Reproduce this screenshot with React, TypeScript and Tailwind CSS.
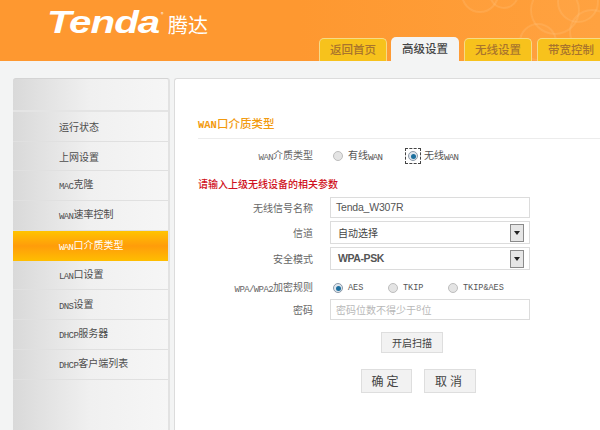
import React from "react";

const cjk = '"Noto Sans CJK SC", "Liberation Sans", sans-serif';

function Mixed({ text, latin = "text-[9px] tracking-[-0.6px] align-[-1px]" }: { text: string; latin?: string }) {
  const parts = text.split(/([\x00-\x7f]+)/).filter(Boolean);
  return (
    <>
      {parts.map((p, i) =>
        /^[\x00-\x7f]+$/.test(p) ? (
          <span key={i} className={`font-['Liberation_Mono',monospace] ${latin}`}>
            {p}
          </span>
        ) : (
          <span key={i}>{p}</span>
        )
      )}
    </>
  );
}

function Tab({ label, active, w }: { label: string; active?: boolean; w: string }) {
  return (
    <div
      className={
        active
          ? `${w} h-[24px] rounded-t-[5px] bg-[#f3f4f4] text-[#454545] font-medium text-[11.5px] flex items-center justify-center`
          : `${w} h-[23px] rounded-t-[5px] bg-[#f7c21c] border border-b-0 border-[#f6da86] text-[#a9742c] font-medium text-[11.5px] flex items-center justify-center whitespace-nowrap overflow-hidden`
      }
    >
      {label}
    </div>
  );
}

const menu = ["运行状态", "上网设置", "MAC克隆", "WAN速率控制", "WAN口介质类型", "LAN口设置", "DNS设置", "DHCP服务器", "DHCP客户端列表"];

function Radio({ on }: { on?: boolean }) {
  return (
    <span
      className={
        on
          ? "w-[10px] h-[10px] shrink-0 rounded-full border border-[#8d9aa8] bg-[#dfe6ee] flex items-center justify-center"
          : "w-[10px] h-[10px] shrink-0 rounded-full border border-[#bdbdbd] bg-[#e4e4e4]"
      }
    >
      {on && <span className="w-[5px] h-[5px] rounded-full bg-[#1c6f9e]" />}
    </span>
  );
}

function Row({ label, children, cls }: { label: React.ReactNode; children: React.ReactNode; cls: string }) {
  return (
    <div className={`flex items-center ${cls}`}>
      <div className="w-[115px] shrink-0 text-right text-[10px] text-[#666] whitespace-nowrap">{label}</div>
      <div className="ml-[17px] flex items-center w-[200px]">{children}</div>
    </div>
  );
}

function Select({ value, bold }: { value: string; bold?: boolean }) {
  return (
    <div className="w-[200px] h-[23px] border border-[#dcdcdc] bg-white flex items-center justify-between pl-[7px] pr-[5px]">
      <span
        className={
          bold
            ? "text-[10.5px] tracking-[-0.4px] text-[#555] font-['Liberation_Sans',sans-serif] font-bold"
            : "text-[10px] text-[#444]"
        }
      >
        {value}
      </span>
      <span className="w-[14px] h-[18px] bg-[#e6e6e6] border border-[#8a8a8a] flex items-center justify-center">
        <svg width="6" height="4" viewBox="0 0 6 4">
          <path d="M0 0h6L3 4z" fill="#222" />
        </svg>
      </span>
    </div>
  );
}

export default function App() {
  return (
    <div className="w-[600px] h-[430px] overflow-hidden flex flex-col bg-[#f3f4f4]" style={{ fontFamily: cjk }}>
      {/* header */}
      <header className="relative h-[61px] shrink-0 bg-gradient-to-r from-[#fe9830] via-[#fe9830] to-[#ffa03c] overflow-hidden">
        <svg className="absolute right-0 top-0" width="190" height="61" viewBox="0 0 190 61" fill="none">
          <g stroke="#ffd49a" strokeOpacity="0.18" strokeWidth="2" fill="#ffc98a" fillOpacity="0.06">
            <circle cx="70" cy="-6" r="18" />
            <circle cx="94" cy="-6" r="14" />
            <circle cx="145" cy="10" r="24" />
            <circle cx="168" cy="2" r="20" />
            <circle cx="128" cy="42" r="18" />
            <circle cx="182" cy="32" r="22" />
          </g>
        </svg>
        <div className="absolute left-[47px] top-[3px] flex items-start">
          <span className="origin-left scale-x-[1.26] inline-block text-white italic font-bold text-[32px] leading-[38px] font-['Liberation_Sans',sans-serif] tracking-[-0.8px]">
            Tenda
          </span>
        </div>
        <span className="absolute left-[161px] top-[11px] text-white text-[5px] leading-[6px]">®</span>
        <span className="absolute left-[168px] top-[10px] text-white text-[20px] leading-[29px]">腾达</span>
        <nav className="absolute left-[319px] bottom-0 flex items-end">
          <Tab label="返回首页" w="w-[68px]" />
          <div className="w-[4px]" />
          <Tab label="高级设置" active w="w-[68px]" />
          <div className="w-[5px]" />
          <Tab label="无线设置" w="w-[68px]" />
          <div className="w-[5px]" />
          <Tab label="带宽控制" w="w-[68px]" />
        </nav>
      </header>

      <div className="flex flex-1 pt-[17px] pl-[13px] gap-[4px] min-h-0">
        {/* sidebar */}
        <aside className="w-[157px] h-[400px] shrink-0 rounded-t-[3px] border-t border-[#d4d4d4] border-r-[2px] border-r-[#e2e2e2] bg-gradient-to-r from-[#d9d9d9] via-[#f0f0f0] to-[#f6f6f6]">
          <div className="h-[33px] border-b-[2px] border-[#e4e4e4]" />
          {menu.map((m, i) =>
            i === 4 ? (
              <div
                key={m}
                className="h-[30px] flex items-center pl-[46px] text-white text-[10px] bg-gradient-to-b from-[#ffc400] via-[#ff9c0a] to-[#ffbe00] whitespace-nowrap"
              >
                <span><Mixed text={m} /></span>
              </div>
            ) : (
              <div
                key={m}
                className="h-[29.7px] flex items-center pl-[46px] text-[#4d4d4d] text-[10px] border-b-[1.5px] border-[#e0e0e0] whitespace-nowrap"
              >
                <span><Mixed text={m} /></span>
              </div>
            )
          )}
        </aside>

        {/* main */}
        <main className="flex-1 rounded-tl-[3px] border-t border-l border-[#dcdcdc] bg-white pl-[23px] pt-[36px]">
          <h1 className="text-[11.5px] leading-[16px] font-medium text-[#f29a0e] whitespace-nowrap">
            <Mixed text="WAN口介质类型" latin="text-[10.5px] font-bold" />
          </h1>
          <div className="mt-[5px] h-px bg-[#ececec]" />

          <div className="flex items-center mt-[9px] h-[16px] -ml-[1px]">
            <div className="w-[116px] text-right text-[10px] text-[#666] whitespace-nowrap">
              <Mixed text="WAN介质类型" />
            </div>
            <div className="ml-[20px] flex items-center w-[72px]">
              <Radio />
              <span className="text-[10px] text-[#555] ml-[5px] whitespace-nowrap">
                <Mixed text="有线WAN" />
              </span>
            </div>
            <span className="w-[16px] h-[16px] border border-dashed border-[#444] flex items-center justify-center">
              <Radio on />
            </span>
            <span className="ml-[3px] text-[10px] text-[#555] whitespace-nowrap">
              <Mixed text="无线WAN" />
            </span>
          </div>

          <p className="mt-[13px] text-[10px] leading-[14px] font-medium text-[#cf1020] whitespace-nowrap">请输入上级无线设备的相关参数</p>

          <Row label="无线信号名称" cls="mt-[6px]">
            <div className="w-[200px] h-[21px] border border-[#dcdcdc] flex items-center pl-[5px] text-[10.5px] tracking-[-0.2px] text-[#555] font-['Liberation_Sans',sans-serif]">
              Tenda_W307R
            </div>
          </Row>
          <Row label="信道" cls="mt-[3px]">
            <Select value="自动选择" />
          </Row>
          <Row label="安全模式" cls="mt-[3px]">
            <Select value="WPA-PSK" bold />
          </Row>
          <Row label={<Mixed text="WPA/WPA2加密规则" />} cls="mt-[11px] h-[14px]">
            <div className="flex items-center whitespace-nowrap text-[8.5px] text-[#555] font-['Liberation_Mono',monospace] pl-[3px]">
              <Radio on />
              <span className="ml-[5px] w-[40px]">AES</span>
              <Radio />
              <span className="ml-[5px] w-[45px]">TKIP</span>
              <Radio />
              <span className="ml-[5px]">TKIP&amp;AES</span>
            </div>
          </Row>
          <Row label="密码" cls="mt-[4px]">
            <div className="w-[200px] h-[21px] border border-[#dcdcdc] flex items-center pl-[5px] text-[10px] text-[#b8b8b8]">
              <Mixed text="密码位数不得少于8位" latin="text-[9px]" />
            </div>
          </Row>

          <div className="ml-[183px] mt-[12px] w-[62px] h-[21px] border border-[#dedede] bg-[#f2f2f2] flex items-center justify-center text-[10px] text-[#444]">
            开启扫描
          </div>
          <div className="ml-[163px] mt-[16px] flex gap-[12px]">
            <div className="w-[51px] h-[24px] border border-[#dedede] bg-[#f2f2f2] flex items-center justify-center text-[12px] text-[#444] tracking-[3px]">
              确定
            </div>
            <div className="w-[52px] h-[24px] border border-[#dedede] bg-[#f2f2f2] flex items-center justify-center text-[12px] text-[#444] tracking-[3px]">
              取消
            </div>
          </div>
        </main>
      </div>
    </div>
  );
}
